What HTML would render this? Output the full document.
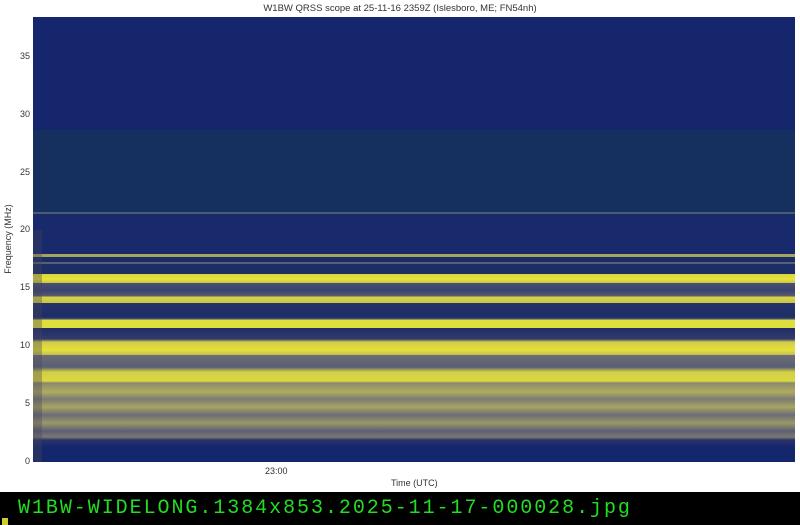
<!DOCTYPE html>
<html><head><meta charset="utf-8"><style>
*{margin:0;padding:0}
body{width:800px;height:525px;background:#fff;position:relative;overflow:hidden;font-family:"Liberation Sans",sans-serif;color:#333}
.t{position:absolute;font-size:9px;white-space:nowrap}
#plot{position:absolute;left:33px;top:17px;width:762px;height:445px;
background:linear-gradient(to bottom,
#15266c 0px,#15266c 113px,
#15305f 113px,#15305f 195px,#4a5a78 195px,#4a5a78 197px,
#182a6c 197px,#182a6c 237px,#a8a45e 237px,#a8a45e 240px,
#1b2d66 240px,#1b2d66 245px,#5c5e78 245px,#5c5e78 247px,#1c2e66 247px,#1c2e66 257px,
#d8d43c 257px,#e8e436 262px,#c8c44c 266px,
#4a4e70 266px,#3a4270 274px,#5a5c70 279px,
#d8d442 280px,#c8c44c 286px,
#263468 286px,#1d2d68 300px,#4a4e70 302px,
#dede3c 303px,#dede3c 311px,
#1e2e68 311px,#343a6c 322px,
#d0cc48 325px,#e6e23a 333px,#c0bc54 338px,
#6e6e78 338px,#5a5e74 350px,
#d2ce46 355px,#dcd840 364px,
#8a8870 366px,#b0ac60 375px,#7a7a74 382px,#a8a462 390px,#6a6c76 398px,#9a9868 406px,#5c5e74 414px,#7a7a72 420px,
#2a3468 423px,#14266c 430px,#14266c 445px);}
#lc{position:absolute;left:33px;top:230px;width:9px;height:232px;background:rgba(70,70,90,.35)}
#bar{position:absolute;left:0;top:492px;width:800px;height:33px;background:#000}
#bar span{position:absolute;left:18px;top:5px;font-family:"Liberation Mono",monospace;font-size:20px;color:#22dd22;letter-spacing:1.95px}
</style></head><body>
<div class="t" style="left:0;width:800px;text-align:center;top:3px;font-size:9.5px">W1BW QRSS scope at 25-11-16 2359Z (Islesboro, ME; FN54nh)</div>
<div id="plot"></div><div id="lc"></div>
<div class="t" style="left:20px;top:51px">35</div>
<div class="t" style="left:20px;top:109px">30</div>
<div class="t" style="left:20px;top:167px">25</div>
<div class="t" style="left:20px;top:224px">20</div>
<div class="t" style="left:20px;top:282px">15</div>
<div class="t" style="left:20px;top:340px">10</div>
<div class="t" style="left:25px;top:398px">5</div>
<div class="t" style="left:25px;top:456px">0</div>
<div class="t" style="left:265px;top:466px">23:00</div>
<div class="t" style="left:391px;top:478px">Time (UTC)</div>
<div class="t" style="left:-32px;top:234px;transform:rotate(-90deg);width:80px;text-align:center">Frequency (MHz)</div>
<div id="bar"><span>W1BW-WIDELONG.1384x853.2025-11-17-000028.jpg</span></div>
<div style="position:absolute;left:2px;top:518px;width:6px;height:7px;background:#cc3"></div>
</body></html>
